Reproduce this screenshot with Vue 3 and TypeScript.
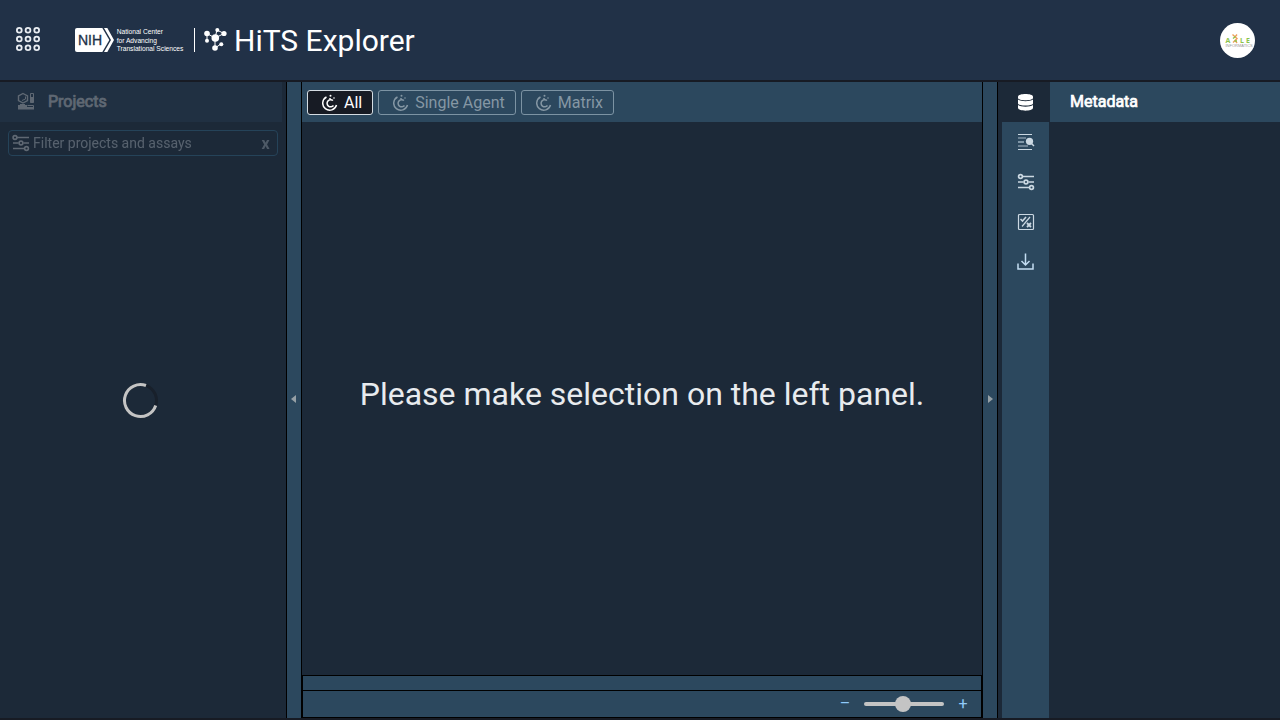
<script setup lang="ts">
import { ref } from 'vue'

const modes = ['All', 'Single Agent', 'Matrix']
const activeMode = ref('All')
const zoom = ref(49)
const filter = ref('')
const tools = ['Metadata', 'Search', 'Filters', 'Selection', 'Download']
const activeTool = ref('Metadata')
const dots = [4.3, 13, 21.7]
</script>

<template>
  <div class="app">
    <header class="topbar">
      <button class="plain apps" aria-label="Applications">
        <svg width="26" height="26" viewBox="0 0 26 26" fill="none" stroke="#e9edf2" stroke-width="1.8">
          <template v-for="y in dots" :key="y">
            <circle v-for="x in dots" :key="x" :cx="x" :cy="y" r="2.4" />
          </template>
        </svg>
      </button>
      <a class="brand" href="#" aria-label="NIH National Center for Advancing Translational Sciences">
        <svg width="112" height="26" viewBox="0 0 336 78">
          <path d="M6 3H82L103 39L82 75H6Q0 75 0 69V9Q0 3 6 3Z" fill="#fff" />
          <path d="M87 3H97L117 39L97 75H87L108 39Z" fill="#fff" />
          <text x="9" y="54" class="nih">NIH</text>
          <text x="125" y="22" class="center-name">National Center</text>
          <text x="125" y="47" class="center-name">for Advancing</text>
          <text x="125" y="72" class="center-name">Translational Sciences</text>
        </svg>
      </a>
      <span class="divider"></span>
      <svg class="molecule" width="24" height="24" viewBox="0 0 24 24" fill="#fff" stroke="#fff">
        <path d="M3 5.500L11 10L20 5.500M11 10L13 2L20 5.500M3 6V13M11 10V20L17 16" fill="none" stroke-width="1" />
        <g stroke="none">
          <circle cx="11.300" cy="10" r="3.800" />
          <circle cx="3" cy="5.500" r="2.800" />
          <circle cx="20" cy="5.500" r="2.600" />
          <circle cx="13.300" cy="2" r="2" />
          <circle cx="3" cy="12.800" r="2" />
          <circle cx="11" cy="20" r="2.800" />
          <circle cx="17.300" cy="16.300" r="2" />
        </g>
      </svg>
      <h1>HiTS Explorer</h1>
      <button class="plain avatar" aria-label="Axle account">
        <svg width="35" height="35" viewBox="0 0 35 35">
          <circle cx="17.5" cy="17.5" r="17.5" fill="#fff" />
          <g class="axle" fill="#8bc34a">
            <text x="5.500" y="20">A</text>
            <text x="20" y="20">L</text>
            <text x="26" y="20">E</text>
          </g>
          <path d="M12.500 11.500L17 15.500L13 19.500M17 11.500L15 14M15 17L17 20" fill="none" stroke="#f0a05c" stroke-width="1.400" />
          <path d="M13 15.500L15.500 13.500M14.500 18H17" fill="none" stroke="#8bc34a" stroke-width="1.400" />
          <text x="5.500" y="24" class="axle-sub">INFORMATICS</text>
        </svg>
      </button>
    </header>

    <main class="workspace">
      <section class="projects">
        <div class="projects-body">
          <h2 class="projects-head">
            <svg width="18" height="18" viewBox="0 0 18 18" fill="none" stroke="#fff">
              <path d="M6 1.500L10.500 4V8.500L6 11L1.500 8.500V4Z" stroke-width="1.400" />
              <path d="M5 8.500L8.500 7V4.500" />
              <path d="M13.500 1.500H16.500V10.500H13.500Z" />
              <path d="M13.500 5H16.500V10.500H13.500ZM1 13H10V15H17V17.500H1Z" fill="#fff" stroke="none" />
              <path d="M3 12.500H8M10.500 13.500H16.500V15.500" />
            </svg>
            Projects
          </h2>
          <div class="filter-box">
            <svg width="18" height="18" viewBox="0 0 18 18" fill="none" stroke="#fff" stroke-width="1.600">
              <path d="M5 3.500H17M1 9H6.500M11.500 9H17M1 14.500H12.500" />
              <circle cx="3" cy="3.500" r="1.900" /><circle cx="9" cy="9" r="1.900" /><circle cx="14.500" cy="14.500" r="1.900" />
            </svg>
            <input v-model="filter" type="text" aria-label="Filter projects and assays" placeholder="Filter projects and assays" />
            <button class="plain clear" aria-label="Clear filter" @click="filter = ''">x</button>
          </div>
        </div>
        <div class="loading" role="status" aria-label="Loading">
          <svg width="38" height="38" viewBox="0 0 38 38" fill="none" stroke-width="3">
            <circle cx="18.500" cy="19.500" r="16" stroke="#18202b" />
            <path d="M24 4.500A16 16 0 1 0 33.700 24.500" stroke="#c4c4c4" />
          </svg>
        </div>
      </section>

      <button class="plain gutter" aria-label="Collapse projects panel">
        <svg width="6" height="8" viewBox="0 0 6 8"><path d="M5 0V8L0 4Z" fill="#96a0a6" /></svg>
      </button>

      <section class="viewer">
        <nav class="modes">
          <button v-for="mode in modes" :key="mode" class="mode" :class="{ active: mode === activeMode }" @click="activeMode = mode">
            <svg width="16" height="18" viewBox="0 0 16 18" fill="none" stroke="currentColor" stroke-width="1.500">
              <path d="M4.500 3A7 7 0 1 0 14.500 11" />
              <path d="M11 6.500A3.600 3.600 0 1 0 11.500 11.500" />
              <path d="M8 5.500V4" />
              <circle cx="8.500" cy="1.800" r="1" fill="currentColor" stroke="none" />
              <circle cx="12" cy="4" r=".8" fill="currentColor" stroke="none" />
            </svg>
            {{ mode }}
          </button>
        </nav>
        <div class="stage">Please make selection on the left panel.</div>
        <footer class="status">
          <div class="strip"></div>
          <div class="zoom-bar">
            <button class="plain step" aria-label="Zoom out" @click="zoom = Math.max(0, zoom - 10)">–</button>
            <input v-model.number="zoom" type="range" min="0" max="100" aria-label="Zoom" />
            <button class="plain step" aria-label="Zoom in" @click="zoom = Math.min(100, zoom + 10)">+</button>
          </div>
        </footer>
      </section>

      <button class="plain gutter" aria-label="Collapse details panel">
        <svg width="6" height="8" viewBox="0 0 6 8"><path d="M1 0V8L6 4Z" fill="#96a0a6" /></svg>
      </button>

      <aside class="details">
        <nav class="tools">
          <button v-for="tool in tools" :key="tool" class="plain tool" :class="{ active: tool === activeTool }" :aria-label="tool" @click="activeTool = tool">
            <svg v-if="tool === 'Metadata'" width="18" height="18" viewBox="0 0 18 18" fill="#fff">
              <path d="M1 3.500C1 0 16 0 16 3.500V5C16 8 1 8 1 5Z" />
              <path d="M1 6.500C4 8.800 13 8.800 16 6.500V10.500C15.500 13.200 1.500 13.200 1 10.500Z" />
              <path d="M1 12C4 14.300 13 14.300 16 12V15C15.500 18.500 1.500 18.500 1 15Z" />
            </svg>
            <svg v-else-if="tool === 'Search'" width="18" height="18" viewBox="0 0 18 18" fill="none" stroke="#cbd8e2">
              <path d="M1 1.500H15M1 16.500H15" />
              <path d="M1 5H9M1 13H11" stroke="#a9bac7" stroke-width="1.200" />
              <path d="M1 9H7" stroke="#8ba1b2" stroke-width="1.800" />
              <circle cx="12.500" cy="8.300" r="3.600" fill="#cbd8e2" stroke="none" />
              <path d="M14.500 10.500L17 13" stroke-width="1.400" />
            </svg>
            <svg v-else-if="tool === 'Filters'" width="18" height="18" viewBox="0 0 18 18" fill="none" stroke="#cbd8e2" stroke-width="1.700">
              <path d="M5 3.500H17M1 9H6.500M11.500 9H17M1 14.500H12.500" />
              <circle cx="3.500" cy="3.500" r="1.900" /><circle cx="9" cy="9" r="1.900" /><circle cx="14.500" cy="14.500" r="1.900" />
            </svg>
            <svg v-else-if="tool === 'Selection'" width="18" height="18" viewBox="0 0 18 18" fill="none" stroke="#cbd8e2" stroke-width="1.200">
              <rect x="1.500" y="1.500" width="15" height="15" rx="1" />
              <path d="M13 4L5 13.500" /><path d="M3.500 6L5.500 8L9 4" stroke-width="1.600" />
              <path d="M10 10L14 14M14 10L10 14" stroke-width="1.800" />
            </svg>
            <svg v-else width="18" height="18" viewBox="0 1 18 18" fill="none" stroke="#c3ddf2" stroke-width="1.500">
              <path d="M1 11.500V17H16V11.500M8.500 1.500V13M4.500 9L8.500 13L12.500 9" />
            </svg>
          </button>
        </nav>
        <section class="metadata">
          <h2>Metadata</h2>
        </section>
      </aside>
    </main>
  </div>
</template>

<style>
body {
  background: #171b24;
}
</style>

<style scoped>
.app {
  box-sizing: border-box;
  height: 100vh;
  display: flex;
  flex-direction: column;
  padding-bottom: 2px;
  background: #171b24;
  color: #fff;
  font-family: Roboto, "Liberation Sans", sans-serif;
  font-size: 16px;
}
.app *, .app *::before { box-sizing: border-box; }
svg { display: block; flex: none; }
h1, h2 { margin: 0; }
.plain {
  display: flex;
  align-items: center;
  justify-content: center;
  padding: 0;
  border: 0;
  background: none;
  color: inherit;
  font: inherit;
  cursor: pointer;
}
.topbar {
  display: flex;
  align-items: center;
  flex: none;
  height: 82px;
  padding: 0 25px 0 15px;
  background: #213147;
  border-bottom: 2px solid #171b24;
}
.apps { height: 28px; margin-right: 34px; align-items: flex-start; }
.nih { font: 42px "Liberation Sans", sans-serif; fill: #213147; stroke: #213147; stroke-width: 1px; }
.center-name { font: 20px "Liberation Sans", sans-serif; fill: #fff; }
.divider { width: 1px; height: 24px; margin: 0 9px 0 7px; background: #fff; }
.molecule { margin-right: 6px; }
h1 { font-size: 30px; font-weight: 400; line-height: 40px; padding-top: 2px; }
.avatar { margin-left: auto; border-radius: 50%; }
.axle { font: 700 7px "Open Sans", sans-serif; }
.axle-sub { font: 4px "Liberation Sans", sans-serif; fill: #999; }

.workspace {
  flex: 1;
  min-height: 0;
  display: flex;
  background: #1c2938;
}
.projects { position: relative; flex: none; width: 286px; }
.projects-body { opacity: 0.3; }
.projects-head {
  display: flex;
  align-items: center;
  gap: 13px;
  height: 40px;
  margin-right: 4px;
  padding: 0 17px 2px;
  background: #2d445a;
  font-size: 16px;
  font-weight: 400;
  -webkit-text-stroke: 0.7px #fff;
}
.filter-box {
  display: flex;
  align-items: center;
  height: 26px;
  margin: 8px 8px 0;
  padding: 0 4px 0 3px;
  border: 1px solid #3f82a8;
  border-radius: 4px;
}
.filter-box input {
  flex: 1;
  min-width: 0;
  padding: 0 0 0 3px;
  border: 0;
  outline: 0;
  background: none;
  color: #fff;
  font: 14px Roboto, sans-serif;
}
.filter-box input::placeholder { color: #e0e6ec; opacity: 1; }
.clear { width: 15px; color: #c4ccd4; font-weight: 700; }
.loading {
  position: absolute;
  inset: 0 5px 0 0;
  display: flex;
  align-items: center;
  justify-content: center;
}
.gutter {
  flex: none;
  width: 16px;
  padding-bottom: 2px;
  background: #2c485e;
  border: solid #000;
  border-width: 0 1px;
}
.viewer { flex: 1; min-width: 0; display: flex; flex-direction: column; }
.modes {
  display: flex;
  gap: 5px;
  height: 40px;
  padding: 8px 5px 7px;
  background: #2c485e;
}
.mode {
  display: flex;
  align-items: center;
  gap: 6px;
  padding: 0 10px 0 14px;
  border: 1px solid #7c93a3;
  border-radius: 3px;
  background: none;
  color: #8597a4;
  font: 16px Roboto, sans-serif;
  cursor: pointer;
}
.mode.active { background: #171b24; border-color: #d5dde3; color: #fff; }
.stage {
  flex: 1;
  display: flex;
  align-items: center;
  justify-content: center;
  padding-bottom: 10px;
  color: #e8ebee;
  font-size: 32px;
}
.status { border: 1px solid #000; background: #2c485e; }
.strip { height: 15px; border-bottom: 1px solid #000; }
.zoom-bar {
  display: flex;
  align-items: center;
  justify-content: flex-end;
  gap: 11px;
  height: 26px;
  padding-right: 10px;
}
.step { width: 16px; height: 24px; padding-bottom: 2px; color: #90caf9; }
input[type="range"] {
  appearance: none;
  width: 80px;
  height: 16px;
  margin: 0;
  background: none;
}
input[type="range"]::-webkit-slider-runnable-track { height: 4px; border-radius: 2px; background: #c4c4c4; }
input[type="range"]::-webkit-slider-thumb {
  appearance: none;
  width: 16px;
  height: 16px;
  margin-top: -6px;
  border-radius: 50%;
  background: #c4c4c4;
}
.details { flex: none; display: flex; width: 282px; padding-left: 4px; }
.tools { flex: none; width: 47px; background: #2c485e; }
.tool { width: 100%; height: 40px; }
.tool.active { width: 48px; padding-right: 1px; background: #1c2938; }
.metadata { flex: 1; }
.metadata h2 {
  height: 40px;
  margin-left: 1px;
  padding-left: 20px;
  background: #2c485e;
  font-size: 16px;
  font-weight: 400;
  line-height: 40px;
  -webkit-text-stroke: 0.7px #fff;
}
</style>
